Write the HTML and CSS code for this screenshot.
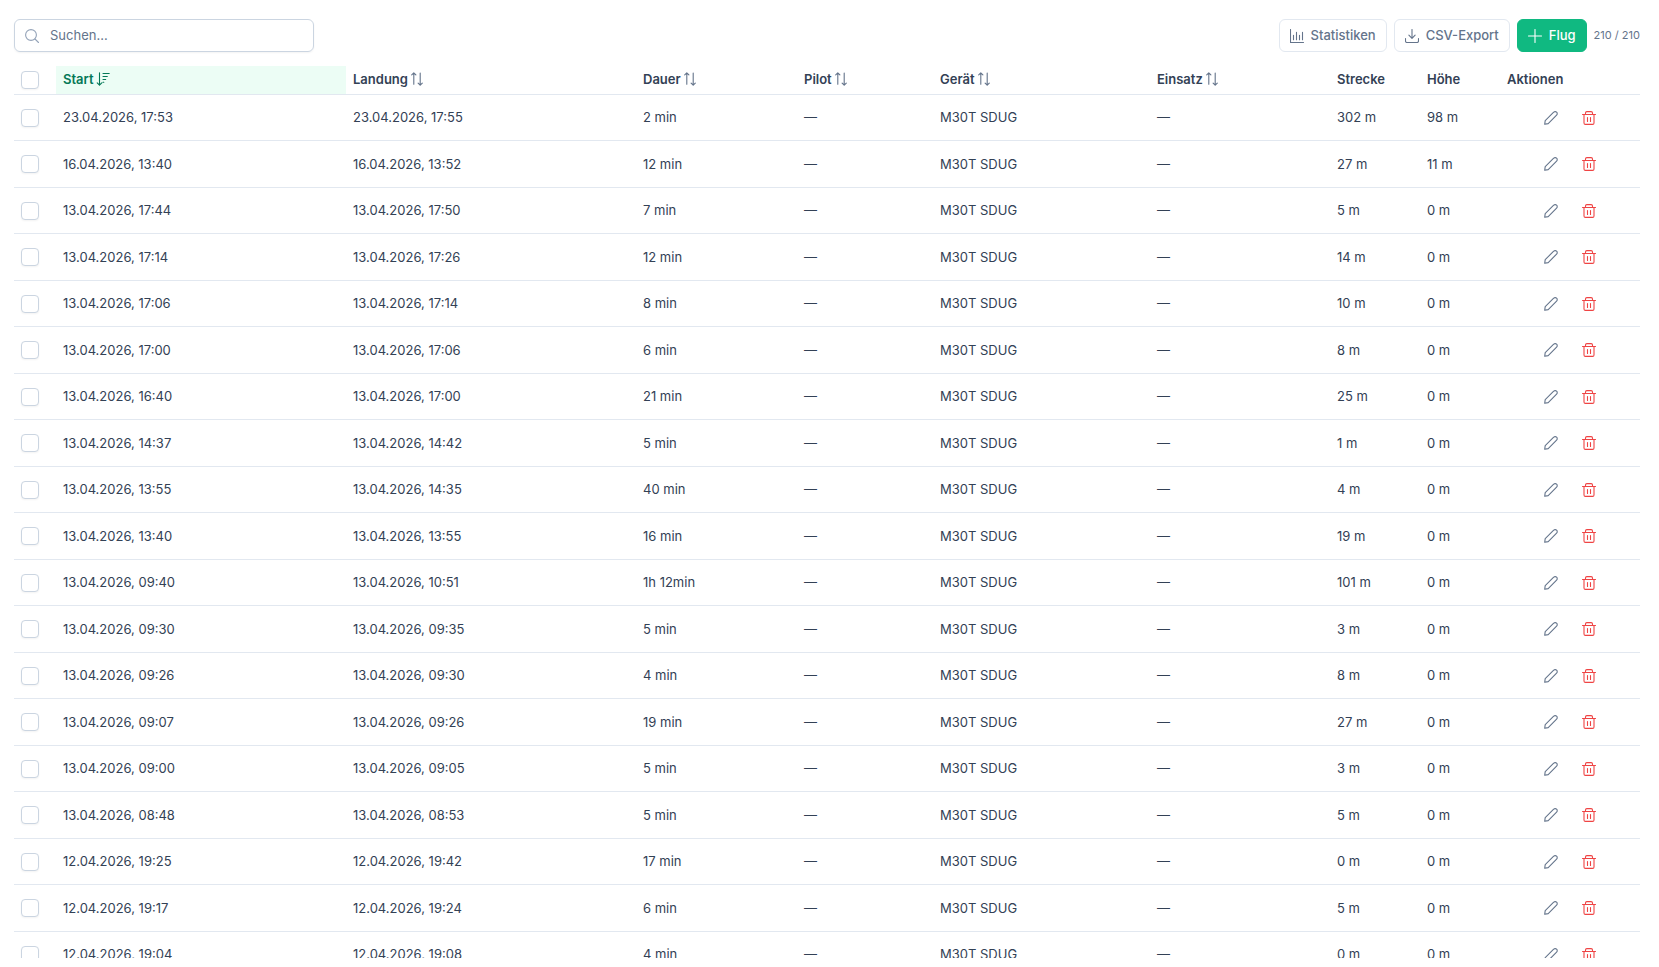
FILE: index.html
```html
<!DOCTYPE html>
<html lang="de">
<head>
  <meta charset="UTF-8">
  <meta name="viewport" content="width=device-width, initial-scale=1.0">
  <title>Flugbuch</title>
  <link rel="stylesheet" href="styles.css">
</head>
<body>
  <svg class="sprite" aria-hidden="true">
    <symbol id="i-search" viewBox="0 0 14 14"><circle cx="6" cy="6" r="5.4"/><path d="M10 10l3.5 3.5"/></symbol>
    <symbol id="i-chart" viewBox="0 0 14 14"><path d="M.5 .5v13h13M3.500 10.800V6.300M6.500 10.800V3.400M9.500 10.800V6.300M12.500 10.800V3.400"/></symbol>
    <symbol id="i-download" viewBox="0 0 14 14"><path d="M7 .5v8.500M3.900 6.200L7 9.300l3.100-3.100M.5 9.500v2.500a1.500 1.500 0 0 0 1.500 1.500h10a1.500 1.500 0 0 0 1.500-1.500V9.500"/></symbol>
    <symbol id="i-plus" viewBox="0 0 14 14"><path d="M7 .5v13M.5 7h13"/></symbol>
    <symbol id="i-sort" viewBox="0 0 14 14"><path d="M3.800 12.200V.8M1.700 2.900L3.800 .8l2.100 2.100M10.200 1v12.200M8.100 11.100l2.100 2.100 2.100-2.100"/></symbol>
    <symbol id="i-sort-desc" viewBox="0 0 14 14"><path d="M3.500 .8v12.400M1.200 10.900l2.300 2.300 2.300-2.300M7 1.500h6.200M7 4.500h4.300M7 7.500h2.700M7 10.300h.8"/></symbol>
    <symbol id="i-pencil" viewBox="0 0 14 14"><path d="M.7 13.300l.5-3.700 8.500-8.400a2 2 0 0 1 2.900 0 2 2 0 0 1 0 2.900l-8.400 8.500z"/></symbol>
    <symbol id="i-trash" viewBox="0 0 14 14"><path d="M.5 3.500h13M3.500 3.500V2A1.400 1.400 0 0 1 4.900 .6h4.200A1.400 1.400 0 0 1 10.500 2v1.500M2 3.500V12a1.400 1.400 0 0 0 1.400 1.400h7.200A1.400 1.400 0 0 0 12 12V3.500M5.500 6.500v4M8.500 6.500v4"/></symbol>
  </svg>

  <div class="page">
    <div class="toolbar">
      <div class="search">
        <svg class="icon"><use href="#i-search"/></svg>
        <input type="text" id="search" placeholder="Suchen..." aria-label="Suchen">
      </div>
      <div class="actions">
        <button class="btn"><svg class="icon"><use href="#i-chart"/></svg>Statistiken</button>
        <button class="btn"><svg class="icon"><use href="#i-download"/></svg>CSV-Export</button>
        <button class="btn btn-primary"><svg class="icon"><use href="#i-plus"/></svg>Flug</button>
        <span class="count">210 / 210</span>
      </div>
    </div>

    <table class="flights">
      <colgroup>
        <col class="col-check">
        <col>
        <col>
        <col class="col-duration">
        <col class="col-pilot">
        <col class="col-device">
        <col class="col-mission">
        <col class="col-distance">
        <col class="col-height">
        <col class="col-actions">
      </colgroup>
      <thead>
        <tr>
          <th class="select-all"><input type="checkbox" class="check" aria-label="Alle auswählen"></th>
          <th class="sorted"><span class="head">Start<svg class="icon"><use href="#i-sort-desc"/></svg></span></th>
          <th><span class="head">Landung<svg class="icon"><use href="#i-sort"/></svg></span></th>
          <th><span class="head">Dauer<svg class="icon"><use href="#i-sort"/></svg></span></th>
          <th><span class="head">Pilot<svg class="icon"><use href="#i-sort"/></svg></span></th>
          <th><span class="head">Gerät<svg class="icon"><use href="#i-sort"/></svg></span></th>
          <th><span class="head">Einsatz<svg class="icon"><use href="#i-sort"/></svg></span></th>
          <th>Strecke</th>
          <th>Höhe</th>
          <th>Aktionen</th>
        </tr>
      </thead>
      <tbody id="rows"></tbody>
    </table>
  </div>
  <script src="script.js"></script>
</body>
</html>
```
FILE: styles.css
```css
* {
  box-sizing: border-box;
}

body {
  margin: 0;
  background: #fff;
  color: #334155;
  font-family: Inter, "Liberation Sans", sans-serif;
  font-size: 13px;
  line-height: 17px;
}

.sprite {
  display: none;
}

.page {
  height: calc(100vh - 9px);
  padding: 19px 19px 0 14px;
  overflow: auto;
  scrollbar-width: none;
}

.icon {
  width: 14px;
  height: 14px;
  flex: none;
  fill: none;
  stroke: currentColor;
  stroke-width: 1.1;
  stroke-linecap: round;
  stroke-linejoin: round;
}

.toolbar {
  display: flex;
  justify-content: space-between;
  align-items: center;
  margin-bottom: 14px;
}

.search {
  display: flex;
  align-items: center;
  gap: 11px;
  width: 300px;
  height: 33px;
  padding: 0 10px;
  border: 1px solid #cbd5e1;
  border-radius: 6px;
  box-shadow: 0 1px 2px rgba(18, 18, 23, 0.05);
  color: #94a3b8;
}

.search input {
  flex: 1;
  min-width: 0;
  padding: 0;
  border: none;
  outline: none;
  background: transparent;
  color: #334155;
  font: inherit;
}

.search input::placeholder {
  color: #64748b;
}

.actions {
  display: flex;
  align-items: center;
  gap: 7px;
}

.btn {
  display: flex;
  align-items: center;
  gap: 7px;
  height: 33px;
  padding: 0 10px;
  border: 1px solid #e2e8f0;
  border-radius: 6px;
  background: transparent;
  color: #64748b;
  font: inherit;
  font-weight: 500;
  cursor: pointer;
}

.btn-primary {
  border-color: #10b981;
  background: #10b981;
  color: #fff;
}

.count {
  color: #64748b;
  font-size: 11px;
}

.flights {
  width: 100%;
  table-layout: fixed;
  border-collapse: separate;
  border-spacing: 0;
}

.col-check { width: 42px; }
.col-duration { width: 161px; }
.col-pilot { width: 136px; }
.col-device { width: 217px; }
.col-mission { width: 180px; }
.col-distance { width: 90px; }
.col-height { width: 80px; }
.col-actions { width: 140px; }

th,
td {
  padding: 0 7px;
  border-bottom: 1px solid #e2e8f0;
  text-align: left;
  white-space: nowrap;
}

th {
  height: 29px;
  padding-bottom: 2px;
  font-weight: 600;
}

th.select-all {
  padding-bottom: 0;
}

td {
  height: 46px;
}

tr:nth-child(even) td {
  height: 47px;
}

.head {
  display: flex;
  align-items: center;
  gap: 2px;
}

.head .icon {
  color: #64748b;
}

.sorted {
  background: #ecfdf5;
  color: #047857;
}

.sorted .icon {
  color: #047857;
}

.check {
  appearance: none;
  display: block;
  width: 18px;
  height: 18px;
  margin: 0;
  border: 1px solid #cbd5e1;
  border-radius: 4px;
  background: #fff;
  box-shadow: 0 1px 2px rgba(18, 18, 23, 0.05);
}

.check:checked {
  border-color: #10b981;
  background: #10b981;
}

.row-actions {
  display: flex;
  justify-content: center;
  gap: 3px;
}

.icon-btn {
  display: flex;
  align-items: center;
  justify-content: center;
  width: 35px;
  height: 33px;
  padding: 0;
  border: none;
  border-radius: 6px;
  background: transparent;
  color: #64748b;
  cursor: pointer;
}

.icon-btn.danger {
  color: #ef4444;
}
```
FILE: script.js
```js
const flights = [
  ["23.04.2026, 17:53", "23.04.2026, 17:55", "2 min", "302 m", "98 m"],
  ["16.04.2026, 13:40", "16.04.2026, 13:52", "12 min", "27 m", "11 m"],
  ["13.04.2026, 17:44", "13.04.2026, 17:50", "7 min", "5 m", "0 m"],
  ["13.04.2026, 17:14", "13.04.2026, 17:26", "12 min", "14 m", "0 m"],
  ["13.04.2026, 17:06", "13.04.2026, 17:14", "8 min", "10 m", "0 m"],
  ["13.04.2026, 17:00", "13.04.2026, 17:06", "6 min", "8 m", "0 m"],
  ["13.04.2026, 16:40", "13.04.2026, 17:00", "21 min", "25 m", "0 m"],
  ["13.04.2026, 14:37", "13.04.2026, 14:42", "5 min", "1 m", "0 m"],
  ["13.04.2026, 13:55", "13.04.2026, 14:35", "40 min", "4 m", "0 m"],
  ["13.04.2026, 13:40", "13.04.2026, 13:55", "16 min", "19 m", "0 m"],
  ["13.04.2026, 09:40", "13.04.2026, 10:51", "1h 12min", "101 m", "0 m"],
  ["13.04.2026, 09:30", "13.04.2026, 09:35", "5 min", "3 m", "0 m"],
  ["13.04.2026, 09:26", "13.04.2026, 09:30", "4 min", "8 m", "0 m"],
  ["13.04.2026, 09:07", "13.04.2026, 09:26", "19 min", "27 m", "0 m"],
  ["13.04.2026, 09:00", "13.04.2026, 09:05", "5 min", "3 m", "0 m"],
  ["13.04.2026, 08:48", "13.04.2026, 08:53", "5 min", "5 m", "0 m"],
  ["12.04.2026, 19:25", "12.04.2026, 19:42", "17 min", "0 m", "0 m"],
  ["12.04.2026, 19:17", "12.04.2026, 19:24", "6 min", "5 m", "0 m"],
  ["12.04.2026, 19:04", "12.04.2026, 19:08", "4 min", "0 m", "0 m"]
];

document.getElementById("rows").innerHTML = flights.map(([start, end, duration, distance, height]) => `
  <tr>
    <td><input type="checkbox" class="check" aria-label="Flug auswählen"></td>
    <td>${start}</td>
    <td>${end}</td>
    <td>${duration}</td>
    <td>—</td>
    <td>M30T SDUG</td>
    <td>—</td>
    <td>${distance}</td>
    <td>${height}</td>
    <td>
      <div class="row-actions">
        <button class="icon-btn" aria-label="Bearbeiten"><svg class="icon"><use href="#i-pencil"/></svg></button>
        <button class="icon-btn danger" aria-label="Löschen"><svg class="icon"><use href="#i-trash"/></svg></button>
      </div>
    </td>
  </tr>`).join("");
```
